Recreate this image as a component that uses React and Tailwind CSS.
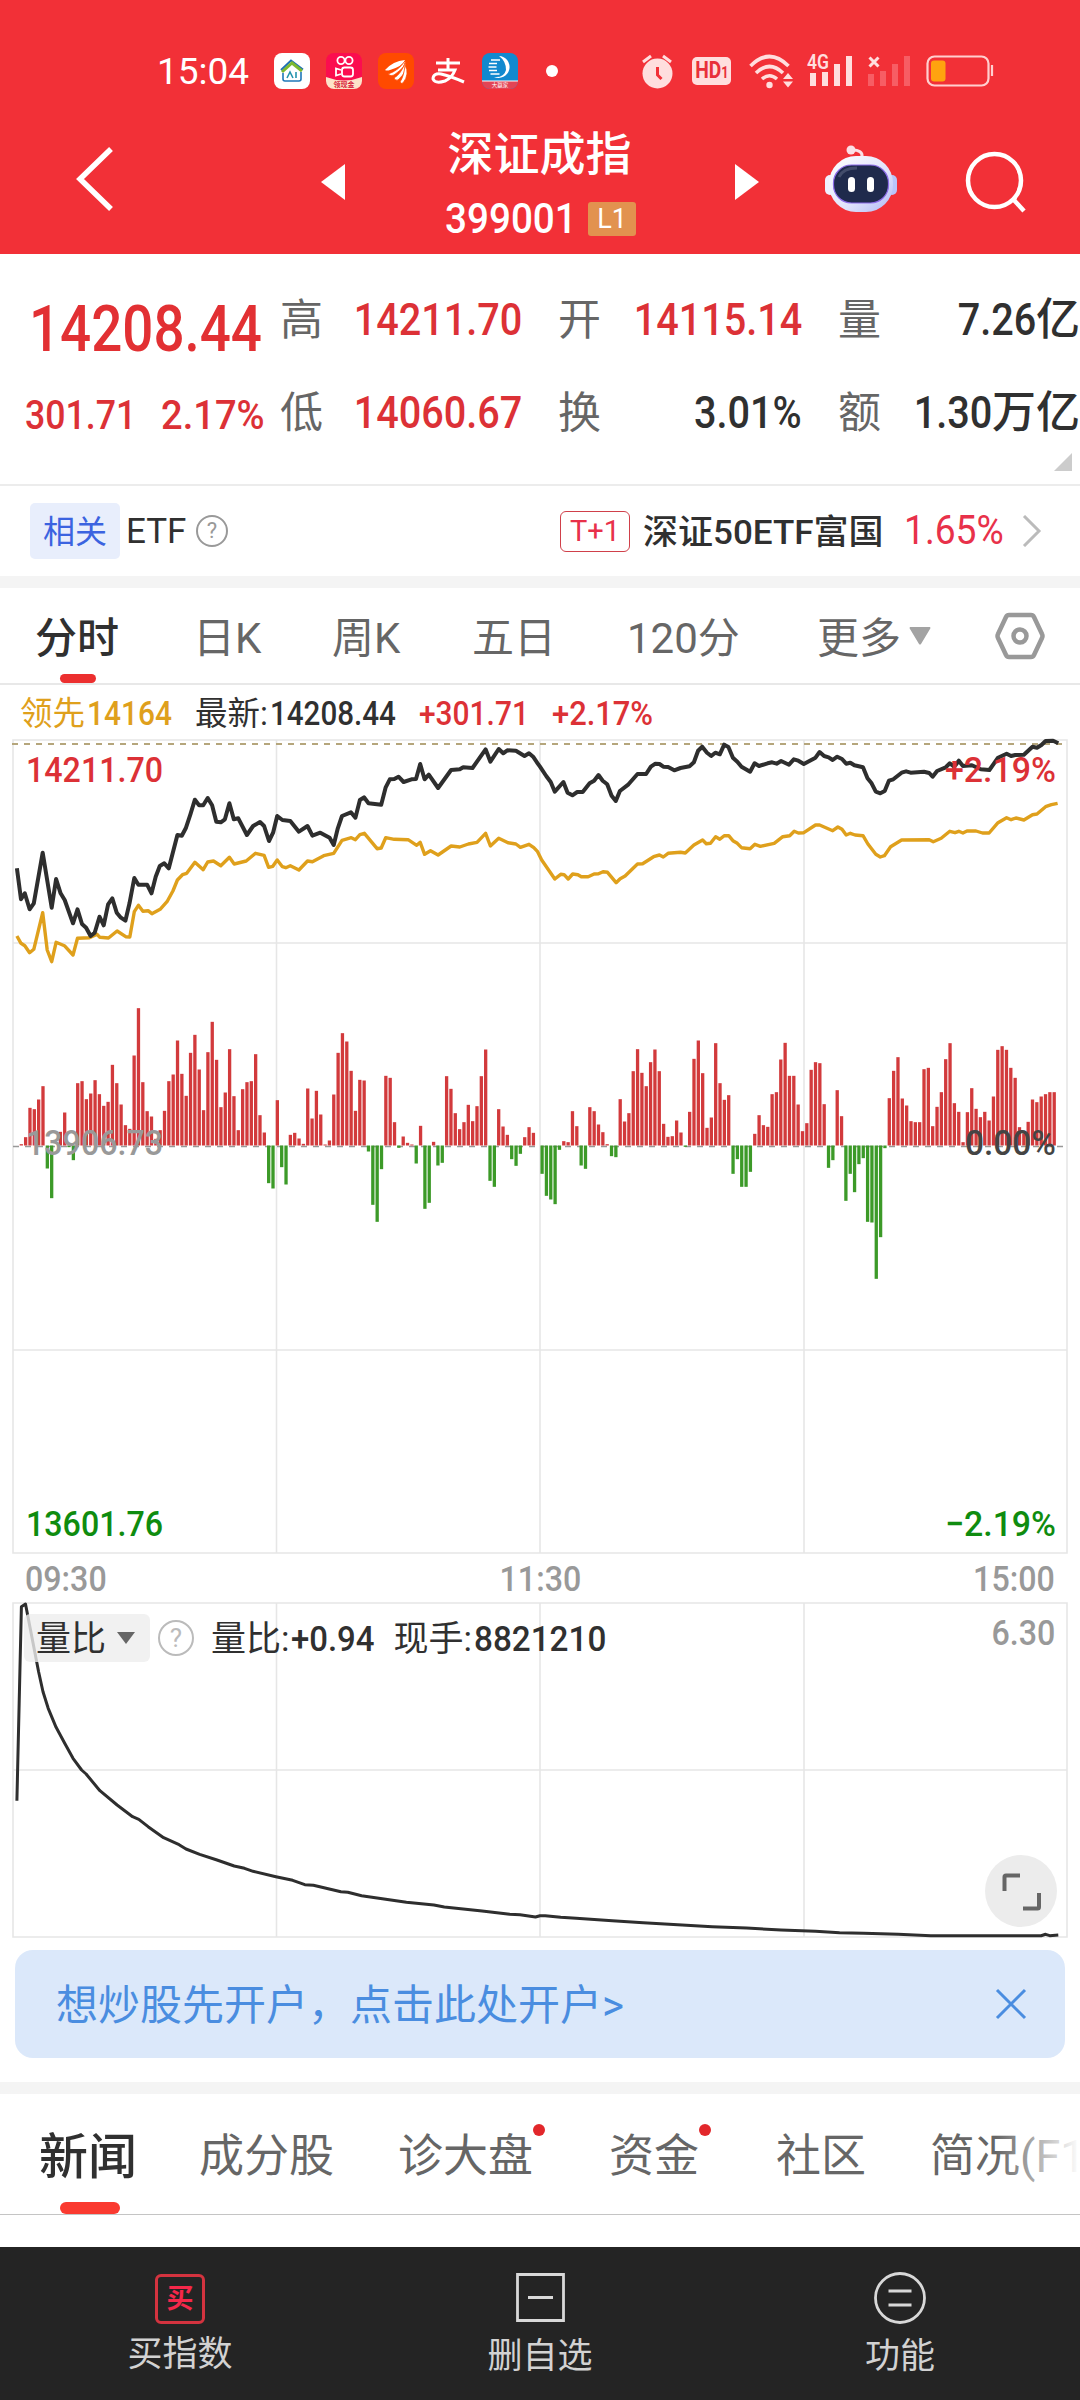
import clsx from 'clsx'

// Plot units used by the recorded series: 2.9037 per px across, 3 per px down.
const UNIT_X = 2.9037
const UNIT_Y = 3

const PRICE = [
  49, 895, 61, 988, 72, 970, 86, 1018, 98, 1000, 124, 848, 150, 1013, 163, 927, 176, 970, 188, 990, 212, 1060, 225, 1018,
  238, 1062, 250, 1073, 263, 1098, 275, 1088, 289, 1040, 301, 1066, 314, 1003, 326, 985, 339, 1028, 351, 1043, 364, 1052,
  376, 1000, 390, 924, 402, 944, 427, 944, 440, 970, 452, 920, 464, 888, 477, 880, 490, 895, 515, 795, 528, 797, 540, 773,
  553, 733, 566, 689, 578, 706, 590, 706, 603, 684, 616, 706, 628, 755, 641, 757, 653, 748, 666, 700, 679, 748, 692, 745,
  717, 795, 735, 768, 755, 756, 767, 768, 781, 813, 793, 788, 805, 738, 820, 750, 843, 753, 868, 785, 893, 768, 907, 797,
  930, 788, 957, 803, 969, 825, 981, 775, 993, 738, 1019, 727, 1032, 743, 1045, 690, 1057, 682, 1070, 700, 1107, 704,
  1120, 652, 1132, 628, 1145, 627, 1157, 620, 1172, 636, 1195, 628, 1208, 627, 1220, 582, 1233, 628, 1245, 614, 1272, 654,
  1310, 600, 1335, 598, 1345, 592, 1372, 594, 1410, 538, 1424, 575, 1448, 537, 1461, 550, 1473, 541, 1498, 542, 1523, 558,
  1536, 550, 1548, 560, 1561, 580, 1568, 590, 1586, 618, 1599, 636, 1611, 665, 1636, 636, 1648, 668, 1662, 676, 1676, 666,
  1692, 666, 1712, 640, 1725, 632, 1738, 615, 1750, 632, 1763, 643, 1776, 677, 1788, 693, 1800, 663, 1825, 643, 1851, 612,
  1876, 612, 1890, 590, 1903, 581, 1915, 582, 1926, 590, 1940, 591, 1958, 601, 1976, 594, 2002, 589, 2015, 577, 2027, 542,
  2039, 530, 2053, 548, 2065, 558, 2077, 548, 2090, 553, 2103, 524, 2115, 531, 2128, 563, 2141, 575, 2153, 590, 2178, 605,
  2191, 580, 2204, 588, 2229, 580, 2242, 577, 2255, 581, 2268, 573, 2291, 584, 2305, 568, 2318, 572, 2334, 582, 2368, 563,
  2380, 546, 2393, 558, 2406, 562, 2418, 570, 2431, 560, 2445, 567, 2457, 581, 2469, 578, 2481, 586, 2506, 592, 2519, 625,
  2531, 640, 2543, 665, 2556, 670, 2569, 663, 2581, 632, 2594, 628, 2618, 608, 2631, 604, 2644, 608, 2683, 605, 2698, 609,
  2708, 620, 2721, 603, 2746, 592, 2758, 580, 2771, 590, 2784, 572, 2796, 588, 2822, 586, 2848, 598, 2873, 600, 2898, 563,
  2923, 551, 2936, 558, 2948, 555, 2973, 554, 2998, 530, 3011, 533, 3024, 525, 3036, 513, 3058, 512, 3073, 520,
]

const LEADING = [
  49, 1098, 61, 1120, 72, 1127, 86, 1148, 98, 1138, 124, 1028, 137, 1140, 150, 1175, 163, 1117, 187, 1127, 212, 1155,
  225, 1105, 260, 1103, 282, 1093, 290, 1102, 315, 1104, 340, 1083, 365, 1100, 377, 1101, 390, 1025, 402, 1006, 415, 1024,
  430, 1022, 441, 1031, 465, 1018, 485, 995, 502, 963, 515, 930, 530, 914, 542, 910, 566, 877, 590, 899, 603, 876, 620, 873,
  641, 887, 666, 862, 680, 882, 715, 873, 742, 850, 767, 856, 780, 892, 792, 889, 805, 870, 820, 890, 830, 893, 843, 887,
  868, 900, 893, 873, 907, 875, 940, 857, 969, 850, 993, 811, 1020, 803, 1032, 809, 1045, 794, 1058, 790, 1095, 836,
  1107, 834, 1120, 803, 1145, 808, 1185, 809, 1210, 826, 1220, 817, 1233, 853, 1250, 842, 1272, 855, 1310, 828, 1335, 831,
  1360, 822, 1385, 817, 1410, 790, 1424, 828, 1448, 805, 1475, 818, 1498, 822, 1511, 832, 1536, 823, 1550, 833, 1561, 845,
  1573, 870, 1611, 927, 1628, 913, 1638, 914, 1650, 927, 1663, 912, 1678, 914, 1688, 920, 1708, 920, 1725, 912, 1738, 911,
  1751, 905, 1764, 907, 1789, 938, 1801, 926, 1815, 918, 1851, 882, 1866, 881, 1898, 860, 1915, 855, 1926, 861, 1940, 850,
  1976, 847, 1990, 849, 2015, 825, 2040, 810, 2051, 821, 2063, 820, 2078, 800, 2090, 808, 2103, 797, 2116, 797, 2128, 812,
  2141, 820, 2153, 833, 2178, 836, 2192, 823, 2208, 829, 2248, 820, 2273, 800, 2293, 797, 2306, 784, 2318, 789, 2334, 788,
  2368, 765, 2380, 765, 2418, 782, 2433, 771, 2445, 778, 2457, 795, 2469, 790, 2483, 795, 2506, 797, 2520, 822, 2543, 853,
  2556, 861, 2568, 857, 2586, 830, 2618, 810, 2698, 809, 2710, 815, 2733, 805, 2758, 784, 2773, 788, 2784, 784, 2796, 789,
  2808, 783, 2834, 783, 2853, 789, 2872, 789, 2898, 758, 2923, 743, 2936, 749, 2950, 744, 2973, 750, 2998, 734, 3011, 732,
  3036, 710, 3053, 704, 3071, 700,
]

const RATIO = [
  49, 962, 62, 380, 74, 372, 112, 575, 125, 635, 140, 685, 163, 742, 188, 790, 212, 835, 237, 870, 250, 882, 290, 932,
  340, 975, 385, 1010, 403, 1018, 430, 1040, 475, 1073, 520, 1094, 540, 1107, 580, 1123, 630, 1140, 680, 1158, 710, 1165,
  735, 1174, 801, 1190, 850, 1201, 885, 1214, 910, 1216, 990, 1235, 1010, 1237, 1050, 1247, 1180, 1267, 1260, 1275,
  1290, 1281, 1400, 1293, 1480, 1303, 1510, 1304, 1555, 1311, 1568, 1307, 1583, 1307, 1628, 1312, 1673, 1315, 1778, 1322,
  1868, 1328, 1968, 1334, 2068, 1340, 2168, 1344, 2268, 1350, 2368, 1354, 2438, 1358, 2508, 1360, 2608, 1363, 2703, 1367,
  3023, 1367, 3036, 1363, 3048, 1367, 3073, 1365,
]

// One bar per minute, positive is red, negative is green.
const BARS = [
  0, 4, 25, 113, 109, 138, 178, -69, -158, 0, 41, 99, -5, -44, 187, 193, 139, 156, 196, 154, 119, 131, 242, 187, 123, 61, 50,
  270, 412, 190, 103, 87, 20, 46, 104, 193, 213, 315, 215, 149, 278, 332, 228, 106, 280, 371, 257, 115, 159, 289, 148, 46,
  169, 190, 193, 274, 91, 39, -113, -129, 136, -65, -117, 32, 38, 21, 5, 171, 81, 164, 93, 3, 15, 153, 278, 337, 312, 224,
  104, 197, 195, -18, -178, -229, -71, 209, 203, 70, -7, 27, 8, 3, -54, 59, -190, -172, 11, -60, -52, 208, 170, 97, 49, 70,
  122, 73, 118, 208, 288, -106, -124, 109, 57, 32, -41, -61, -25, 25, 55, 38, 0, -85, -151, -162, -176, -13, 13, 10, 103, 58,
  -60, -70, 115, 103, 63, 40, 4, -32, -35, 139, 72, 97, 223, 289, 218, 178, 250, 288, 223, 65, 26, 28, 75, 39, -4, 101, 260,
  315, 217, 53, 84, 307, 187, 137, 151, -85, -41, -124, -124, -79, 35, 91, 61, 56, 154, 160, 258, 308, 209, 209, 123, 43, 67,
  227, 250, 247, 124, -67, -44, 166, 88, -166, -85, -140, -56, -38, -229, -231, -400, -275, -8, 142, 224, 265, 141, 120, 73,
  70, 70, 229, 233, 58, 116, 160, 259, 307, 127, 101, 10, 100, 172, 110, 85, 101, 75, 147, 287, 298, 287, 233, 203, 55, 36,
  71, 138, 130, 147, 154, 160, 160,
]

function toPoints(series, top) {
  const points = []
  for (let i = 0; i < series.length; i += 2) {
    points.push(`${(series[i] / UNIT_X).toFixed(1)},${(top + series[i + 1] / UNIT_Y).toFixed(1)}`)
  }
  return points.join(' ')
}

function Num({ className, children }) {
  return <span className={clsx('inline-block whitespace-nowrap', className)}>{children}</span>
}

function AppIcons() {
  return (
    <>
      <svg className="ml-6 h-9 w-9" viewBox="0 0 36 36">
        <rect width="36" height="36" rx="8" fill="#fff" />
        <path d="M7 17 17 7.500l12 9" fill="none" stroke="#1f6fb5" strokeWidth="2" />
        <path d="M8 19 18 10l10 8" fill="none" stroke="#7cb82f" strokeWidth="3" />
        <path d="M9 20v6q0 2 2 2h14q2 0 2-2v-7" fill="none" stroke="#1f77b8" strokeWidth="1.600" />
        <path d="m13 25 3-6 3 6M22 19v6" fill="none" stroke="#2694ad" strokeWidth="1.600" />
      </svg>
      <svg className="ml-4 h-9 w-9" viewBox="0 0 36 36">
        <defs>
          <clipPath id="camClip"><rect width="36" height="36" rx="8" /></clipPath>
        </defs>
        <g clipPath="url(#camClip)">
          <rect width="36" height="36" fill="#fb0d4f" />
          <path d="M0 24q18 7 36 0v12H0z" fill="#fde3c8" />
          <g fill="none" stroke="#fff" strokeWidth="1.800">
            <circle cx="15" cy="7.500" r="3.600" />
            <circle cx="23" cy="7.500" r="3.600" />
            <rect x="16" y="14.500" width="11" height="9" rx="2.500" />
            <path d="m15 17-5-1.500v7l5-1.500" />
          </g>
          <text x="18" y="34" fontSize="7" fontWeight="700" textAnchor="middle" fill="#d81e3c">领现金</text>
        </g>
      </svg>
      <svg className="ml-4 h-9 w-9" viewBox="0 0 36 36">
        <rect width="36" height="36" rx="8" fill="#ff4a00" />
        <path d="M7 17Q15 8 27 7q-2 6-15 10-3 1-5 0Z" fill="#fff" />
        <path d="M10 21q10-3 17-13 2 5-11 14-3 2-6-1Z" fill="#fff" stroke="#ff4a00" strokeWidth=".8" />
        <path d="M16 25q7-4 11-15 4 7-7 17-3 1-4-2Z" fill="#fff" stroke="#ff4a00" strokeWidth=".8" />
        <path d="M22 29q4-6 5-17 5 9-2 18-2 1-3-1Z" fill="#fff" stroke="#ff4a00" strokeWidth=".8" />
      </svg>
      <svg className="ml-4 h-9 w-9" viewBox="0 0 36 36" fill="none" stroke="#fff" strokeWidth="3">
        <path d="M6 10h24M18 5v11M8 17h17q-3 8-10 11-10 3-12-2 0-6 8-5 9 2 23 8" />
      </svg>
      <svg className="ml-4 h-9 w-9" viewBox="0 0 36 36">
        <defs>
          <clipPath id="dzClip"><rect width="36" height="36" rx="8" /></clipPath>
        </defs>
        <g clipPath="url(#dzClip)">
          <rect width="36" height="36" fill="#1189cf" />
          <path d="M0 28h36v8H0z" fill="#e34455" />
          <path d="M17 3a11 11 0 1 1-5 21q10 1 12-7 0-9-7-14Z" fill="#fff" />
          <path d="M9 7h9M7 10.500h8M6.500 14h8M7 17.500h8M8.500 21h9" stroke="#fff" strokeWidth="1.500" />
          <path d="M0 28h36" stroke="#fff" strokeWidth="1" />
          <text x="18" y="34.200" fontSize="5.500" textAnchor="middle" fill="#fff">大赢家</text>
        </g>
      </svg>
      <span className="ml-7 h-3 w-3 rounded-full bg-white" />
    </>
  )
}

function StatusIcons() {
  return (
    <>
      <svg className="ml-[83px] h-9 w-8" viewBox="0 0 32 36">
        <path d="m2 9 8-6M30 9l-8-6" stroke="#ffdede" strokeWidth="3" />
        <circle cx="16.500" cy="20.500" r="15" fill="#ffdede" />
        <path d="M16.500 14v8l4 4" fill="none" stroke="#f23037" strokeWidth="3" />
      </svg>
      <span className="ml-[19px] flex h-7 w-[39px] items-center justify-center rounded-[5px] bg-[#ffdede] text-[#e8303a]">
        <span className="flex scale-x-[.8] items-baseline text-[24px] leading-7 font-bold">HD<span className="text-[16px]">1</span></span>
      </span>
      <svg className="ml-[18px] h-9 w-[46px]" viewBox="0 0 46 36" fill="none" stroke="#ffdede" strokeWidth="3.600">
        <path d="M1.500 13q19-19 38 0M7 20q13.500-13 27 0M13 26q7.500-6.500 15 0" />
        <circle cx="20.500" cy="32" r="3.200" fill="#ffdede" stroke="none" />
        <path d="m34 26 5-6 5 6zM34 28.500l5 6 5-6z" fill="#ffdede" stroke="none" />
      </svg>
      <svg className="ml-[12px] h-9 w-[48px] overflow-visible" viewBox="0 0 48 36" fill="#ffdede">
        <text x="0" y="16" fontSize="21" fontWeight="600" textLength="22" lengthAdjust="spacingAndGlyphs">4G</text>
        <path d="M3 20h6v13H3zM15 19h6v14h-6zM27 11h6v22h-6zM39 3h6v30h-6z" />
      </svg>
      <svg className="ml-[13px] h-9 w-[44px]" viewBox="0 0 44 36">
        <path d="M0 21h6v12H0zM12 18h6v15h-6zM24 11h6v22h-6zM36 3h6v30h-6z" fill="#f75d64" />
        <path d="m1.500 4.500 9 9m0-9-9 9" stroke="#ffdede" strokeWidth="3" />
      </svg>
      <svg className="ml-[14px] h-9 w-[70px]" viewBox="0 0 70 36">
        <rect x="1.500" y="3.500" width="61" height="29" rx="7" fill="none" stroke="#ffcfcf" strokeWidth="2.200" />
        <rect x="5" y="7.500" width="14.500" height="21" rx="3" fill="#ffa30f" />
        <path d="M66 12v11" stroke="#ffcfcf" strokeWidth="2.200" />
      </svg>
    </>
  )
}

function Header() {
  return (
    <header className="h-[254px] bg-[#f23037] pt-12 text-white">
      <div className="flex h-[46px] items-center">
        <span className="ml-[157px] w-[93px] text-[37px] leading-none">15:04</span>
        <AppIcons />
        <StatusIcons />
      </div>
      <div className="flex h-40 items-start">
        <svg className="mt-[52px] ml-[75px] h-[66px] w-10" viewBox="0 0 40 66" fill="none" stroke="#fff" strokeWidth="5.500">
          <path d="M36 3 5 33l31 30" />
        </svg>
        <svg className="mt-[70px] ml-[206px] h-9 w-6" viewBox="0 0 24 36"><path d="M24 0v36L0 18z" fill="#fff" /></svg>
        <div className="ml-[95px] w-[204px] pt-[30px]">
          <h1 className="pr-[5px] text-center text-[46px] leading-[60px] font-medium">深证成指</h1>
          <div className="flex h-[70px] items-center">
            <Num className="ml-[5px] w-[143px] origin-left scale-x-[.92] text-[42px] leading-none font-medium">399001</Num>
            <span className="flex h-[34px] w-12 items-center justify-center rounded-[3px] bg-[#e2924f] text-[27px] leading-none">L1</span>
          </div>
        </div>
        <svg className="mt-[70px] ml-[91px] h-9 w-6" viewBox="0 0 24 36"><path d="M0 0v36l24-18z" fill="#fff" /></svg>
        <svg className="mt-[51px] ml-[65px] h-[68px] w-[74px]" viewBox="0 0 74 68">
          <defs>
            <linearGradient id="shell" x1="0" y1="0" x2="1" y2="1">
              <stop offset="0" stopColor="#fff" />
              <stop offset=".6" stopColor="#e0e2fb" />
              <stop offset="1" stopColor="#aeb8f5" />
            </linearGradient>
          </defs>
          <path d="M38 12q1-7-10-7" fill="none" stroke="#fbdfe6" strokeWidth="3" />
          <circle cx="27" cy="5" r="4.500" fill="#fbdfe6" />
          <rect x="1" y="30" width="10" height="20" rx="5" fill="#f0f0ff" />
          <rect x="63" y="30" width="10" height="20" rx="5" fill="#b9c4fa" />
          <rect x="5" y="11" width="64" height="56" rx="27" fill="url(#shell)" />
          <rect x="9.500" y="20" width="55" height="38" rx="18" fill="#1f2a4c" stroke="#8c6be8" strokeWidth="1.200" />
          <path d="M15 32q4-9 18-9" fill="none" stroke="#5a6480" strokeWidth="3" opacity=".6" />
          <rect x="24" y="32" width="7" height="15" rx="3.500" fill="#fff" />
          <rect x="43" y="32" width="7" height="15" rx="3.500" fill="#fff" />
        </svg>
        <svg className="mt-[56px] ml-[66px] h-[64px] w-[64px]" viewBox="0 0 64 64" fill="none" stroke="#fff" strokeWidth="4.500">
          <circle cx="30.500" cy="30.500" r="26.500" />
          <path d="m49 49 11 12" />
        </svg>
      </div>
    </header>
  )
}

function Stat({ label, value, unit, dark }) {
  return (
    <div className="flex h-[50px] items-center justify-between">
      <span className="text-[43px] leading-[50px] text-[#666]">{label}</span>
      <span className={clsx('flex items-center text-[44px] leading-[50px] font-medium', dark ? 'text-[#303030]' : 'text-[#dc3136]')}>
        <Num className="origin-right scale-x-[.9]">{value}</Num>
        {unit ? <span>{unit}</span> : null}
      </span>
    </div>
  )
}

function Quote() {
  return (
    <section className="relative flex h-[232px] border-b-2 border-[#ececec]">
      <div className="w-[280px] font-medium text-[#e23033]">
        <div className="mt-[44px] ml-[29px] h-16">
          <Num className="origin-left scale-x-[.855] text-[64px] leading-[64px]">14208.44</Num>
        </div>
        <div className="mt-[28px] ml-[25px] flex h-[50px] items-center text-[41px] leading-none text-[#dc3136]">
          <Num className="w-[136px] origin-left scale-x-[.87]">301.71</Num>
          <Num className="origin-left scale-x-[.93]">2.17%</Num>
        </div>
      </div>
      <div className="flex w-[242px] flex-col gap-[43px] pt-[41px]">
        <Stat label="高" value="14211.70" />
        <Stat label="低" value="14060.67" />
      </div>
      <div className="ml-9 flex w-[244px] flex-col gap-[43px] pt-[41px]">
        <Stat label="开" value="14115.14" />
        <Stat label="换" value="3.01%" dark />
      </div>
      <div className="ml-9 flex w-[242px] flex-col gap-[43px] pt-[41px]">
        <Stat label="量" value="7.26" unit="亿" dark />
        <Stat label="额" value="1.30" unit="万亿" dark />
      </div>
      <svg className="absolute right-2 bottom-[13px] h-[18px] w-[18px]" viewBox="0 0 18 18"><path d="M18 0v18H0z" fill="#ccc" /></svg>
    </section>
  )
}

function Related() {
  return (
    <section className="flex h-[90px] items-center">
      <span className="ml-[30px] flex h-14 w-[90px] items-center justify-center rounded-[5px] bg-[#e8eefc] pt-[2px] text-[32px] text-[#3b63e0]">相关</span>
      <span className="ml-[6px] w-[63px] pt-[3px] text-[35px] text-[#303030]">ETF</span>
      <span className="ml-[7px] flex h-8 w-8 items-center justify-center rounded-full border-2 border-[#999] text-[22px] leading-none text-[#999]">?</span>
      <span className="ml-[332px] flex h-[41px] w-[70px] items-center justify-center rounded-md border border-[#d0404a] text-[29px] leading-none text-[#e8314a]">T+1</span>
      <span className="ml-[13px] w-[261px] pt-[3px] text-[34px] whitespace-nowrap text-[#303030]">
        <span className="inline-block origin-left scale-x-[1.03] font-medium">深证50ETF富国</span>
      </span>
      <span className="w-[112px] text-[40px] leading-none text-[#e8314a]">
        <span className="inline-block origin-left scale-x-[.93]">1.65%</span>
      </span>
      <svg className="ml-[6px] h-8 w-5" viewBox="0 0 20 32" fill="none" stroke="#bbb" strokeWidth="3">
        <path d="m2 1 15 15L2 31" />
      </svg>
    </section>
  )
}

function PeriodTabs() {
  return (
    <nav className="flex h-[97px] items-center border-b-2 border-[#e8e8e8] text-[42px] whitespace-nowrap text-[#666]">
      <div className="relative ml-[35px] flex h-full w-[83px] items-center pt-[5px] font-medium text-[#303030]">
        分时
        <span className="absolute bottom-0 left-[25px] h-[9px] w-9 rounded-full bg-[#ec2f2f]" />
      </div>
      <span className="ml-[75px] w-[139px] pt-[5px]">日K</span>
      <span className="w-[140px] pt-[5px]">周K</span>
      <span className="w-[155px] pt-[5px]">五日</span>
      <span className="w-[190px] pt-[5px]">120分</span>
      <span className="w-[92px] pt-[5px]">更多</span>
      <svg className="h-[18px] w-[22px]" viewBox="0 0 22 18"><path d="M1 0h20q1 1 0 2L12 17q-1 1-2 0L1 2Q0 1 1 0Z" fill="#a3a3a3" /></svg>
      <svg className="ml-[64px] h-12 w-[50px]" viewBox="0 0 50 48" fill="none" stroke="#999" strokeWidth="4.500" strokeLinejoin="round">
        <path d="M14 3h22q2 0 3 2l8 17q1 2 0 4l-8 17q-1 2-3 2H14q-2 0-3-2L3 26q-1-2 0-4l8-17q1-2 3-2Z" />
        <circle cx="25" cy="24" r="6.500" />
      </svg>
    </nav>
  )
}

function ChartInfo() {
  return (
    <div className="flex h-[53px] items-center pt-[5px] text-[32.5px] leading-none whitespace-nowrap">
      <span className="ml-5 text-[#dfa01c]">领先</span>
      <Num className="ml-[2px] w-[108px] origin-left scale-x-[.92] font-medium text-[#dfa01c]">14164</Num>
      <span className="text-[#303030]">最新:</span>
      <Num className="ml-[2px] w-[149px] origin-left scale-x-[.91] font-medium text-[#303030]">14208.44</Num>
      <Num className="w-[133px] origin-left scale-x-[.92] font-medium text-[#dc3136]">+301.71</Num>
      <Num className="origin-left scale-x-[.95] font-medium text-[#dc3136]">+2.17%</Num>
    </div>
  )
}

function Label({ x, y, w, fill, children }) {
  return (
    <text x={x} y={y} fontSize="35.500" fontWeight="500" fill={fill} textLength={w} lengthAdjust="spacingAndGlyphs">
      {children}
    </text>
  )
}

function MinuteChart() {
  return (
    <svg className="block h-[818px] w-[1080px]" viewBox="0 738 1080 818">
      <path d="M13 740H1067V1553H13ZM276.500 740V1553M540 740V1553M804 740V1553M13 943H1067M13 1350H1067" fill="none" stroke="#e6e6e6" strokeWidth="1.600" />
      <path d="M12 744H1067" stroke="#b5a67c" strokeWidth="2" strokeDasharray="6 6" />
      <path d="M13 1146.500H1067" stroke="#999" strokeWidth="1.600" strokeDasharray="6 6" />
      {BARS.map((value, i) => {
        const size = Math.abs(value) / UNIT_Y
        const base = 1145.5
        return (
          <rect
            key={i}
            x={15.3 + i * 4.34}
            y={value > 0 ? base - size : base}
            width="3.300"
            height={size}
            fill={value > 0 ? '#d23a3c' : '#3c9a28'}
          />
        )
      })}
      <polyline points={toPoints(LEADING, 570)} fill="none" stroke="#dfa01c" strokeWidth="3.400" strokeLinejoin="round" />
      <polyline points={toPoints(PRICE, 570)} fill="none" stroke="#2e2e2e" strokeWidth="4" strokeLinejoin="round" />
      <Label x="26" y="782" w="137" fill="#dc3136">14211.70</Label>
      <Label x="945" y="782" w="111" fill="#dc3136">+2.19%</Label>
      <Label x="26" y="1155" w="137" fill="#999">13906.73</Label>
      <Label x="965" y="1155" w="91" fill="#444">0.00%</Label>
      <Label x="26" y="1536" w="137" fill="#0f8c0f">13601.76</Label>
      <Label x="945" y="1536" w="111" fill="#0f8c0f">−2.19%</Label>
    </svg>
  )
}

function TimeAxis() {
  return (
    <div className="flex h-11 items-center justify-between px-[25px] pt-[2px] text-[35px] leading-none font-medium text-[#999]">
      <Num className="origin-left scale-x-[.92]">09:30</Num>
      <Num className="scale-x-[.92]">11:30</Num>
      <Num className="origin-right scale-x-[.92]">15:00</Num>
    </div>
  )
}

function RatioChart() {
  return (
    <div className="relative h-[340px]">
      <svg className="block h-[340px] w-[1080px]" viewBox="0 1600 1080 340">
        <path d="M13 1603H1067V1937H13ZM276.500 1603V1937M540 1603V1937M804 1603V1937M13 1770H1067" fill="none" stroke="#e6e6e6" strokeWidth="1.600" />
        <polyline points={toPoints(RATIO, 1480)} fill="none" stroke="#2e2e2e" strokeWidth="3" strokeLinejoin="round" />
      </svg>
      <div className="absolute top-[14px] left-6 flex h-12 items-center text-[35px] leading-none whitespace-nowrap text-[#303030]">
        <div className="flex h-12 w-[126px] items-center rounded-md bg-[#eeeeee]/80 pl-[12px]">
          <span className="pt-[3px]">量比</span>
          <svg className="ml-[11px] h-3 w-[18px]" viewBox="0 0 18 12"><path d="M0 0h18L9 12z" fill="#666" /></svg>
        </div>
        <span className="ml-2 flex h-9 w-9 items-center justify-center rounded-full border-2 border-[#bbb] text-[26px] leading-none text-[#bbb]">?</span>
        <span className="ml-[17px] pt-[3px]">量比:</span>
        <Num className="ml-[2px] w-[102px] origin-left scale-x-[.94] pt-[3px] font-medium">+0.94</Num>
        <span className="pt-[3px]">现手:</span>
        <Num className="ml-[2px] origin-left scale-x-[.95] pt-[3px] font-medium">8821210</Num>
      </div>
      <Num className="absolute top-[14px] right-[25px] origin-right scale-x-[.92] text-[35px] leading-[40px] font-medium text-[#999]">6.30</Num>
      <span className="absolute top-[255px] right-[23px] flex h-[72px] w-[72px] items-center justify-center rounded-full bg-[#ececec]">
        <svg className="h-10 w-10" viewBox="0 0 40 40" fill="none" stroke="#666" strokeWidth="4">
          <path d="M3.500 20V6q0-1.500 1.500-1.500h14M38 22v14q0 1.500-1.500 1.500H22" />
        </svg>
      </span>
    </div>
  )
}

function Banner() {
  return (
    <div className="mx-[15px] mt-[10px] flex h-[108px] items-center justify-between rounded-[18px] bg-[#dbe8fa] pr-[38px] pl-[41px] text-[42px] text-[#4a8de0]">
      <span className="pt-[3px] whitespace-nowrap">想炒股先开户，点击此处开户&gt;</span>
      <svg className="h-8 w-8" viewBox="0 0 32 32" stroke="#4a8de0" strokeWidth="3"><path d="m2 2 28 28M30 2 2 30" /></svg>
    </div>
  )
}

const NEWS_TABS = [
  { label: '成分股', box: 'w-[199px]' },
  { label: '诊大盘', box: 'w-[211px]', dot: true },
  { label: '资金', box: 'w-[167px]', dot: true },
  { label: '社区', box: 'w-[154px]' },
  { label: '简况(F10)', box: 'w-[200px]' },
]

function NewsTabs() {
  return (
    <nav className="relative flex h-[121px] items-center overflow-hidden border-b border-[#c4c4c4] whitespace-nowrap">
      <div className="relative ml-[39px] flex h-full w-[160px] shrink-0 items-center pt-[8px] text-[49px] font-medium text-[#303030]">
        新闻
        <span className="absolute bottom-0 left-[21px] h-3 w-[60px] rounded-full bg-[#fa3a30]" />
      </div>
      {NEWS_TABS.map((tab) => (
        <div key={tab.label} className={clsx('shrink-0 pt-[6px] text-[45px] text-[#666]', tab.box)}>
          <span className="relative">
            {tab.label}
            {tab.dot ? <span className="absolute top-[-6px] right-[-12px] h-3 w-3 rounded-full bg-[#e2272b]" /> : null}
          </span>
        </div>
      ))}
      <span className="absolute top-0 right-0 h-full w-[84px] bg-linear-to-r from-white/0 to-white" />
    </nav>
  )
}

function BottomBar() {
  return (
    <footer className="grid h-[153px] grid-cols-3 bg-[#242424] text-[35px] leading-[46px] text-[#d2d2d2]">
      <div className="flex flex-col items-center pt-[27px]">
        <span className="flex h-[50px] w-[50px] items-center justify-center rounded-[6px] border-[3px] border-[#d4333f] text-[27px] leading-none font-bold text-[#f5284a]">买</span>
        <span className="mt-[8px]">买指数</span>
      </div>
      <div className="flex flex-col items-center pt-[26px]">
        <svg className="h-[49px] w-[49px]" viewBox="0 0 49 49" fill="none" stroke="#d8d8d8" strokeWidth="2.800">
          <path d="M1.500 1.500h46v46h-46zM12 24.500h25" />
        </svg>
        <span className="mt-[12px]">删自选</span>
      </div>
      <div className="flex flex-col items-center pt-[25px]">
        <svg className="h-[52px] w-[52px]" viewBox="0 0 52 52" fill="none" stroke="#d8d8d8" strokeWidth="2.800">
          <circle cx="26" cy="26" r="24.500" />
          <path d="M14.500 19h23M14.500 33h23" />
        </svg>
        <span className="mt-[10px]">功能</span>
      </div>
    </footer>
  )
}

export default function App() {
  return (
    <div className="h-[2400px] w-[1080px] overflow-hidden bg-white font-[Roboto,'Noto_Sans_CJK_SC',sans-serif]">
      <Header />
      <Quote />
      <Related />
      <div className="h-3 bg-[#f4f4f4]" />
      <PeriodTabs />
      <ChartInfo />
      <MinuteChart />
      <TimeAxis />
      <RatioChart />
      <Banner />
      <div className="mt-6 h-3 bg-[#f4f4f4]" />
      <NewsTabs />
      <div className="h-8" />
      <BottomBar />
    </div>
  )
}
